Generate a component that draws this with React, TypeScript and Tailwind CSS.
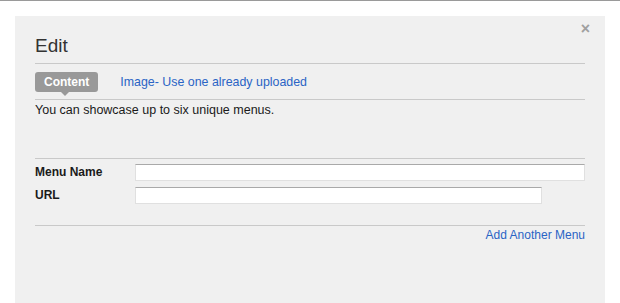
import React from 'react';

const font = { fontFamily: '"Liberation Sans", Arial, sans-serif' };

export default function App() {
  return (
    <div className="min-h-[303px] w-[620px] bg-white border-t border-[#9a9a9a]" style={font}>
      <div className="relative ml-[15px] mt-[15px] h-[287px] w-[590px] bg-[#f0f0f0] px-5 pt-[19px]">
        {/* Close */}
        <button className="absolute right-[15px] top-[5px] text-[16px] font-bold leading-none text-[#a0a0a0]">
          ×
        </button>

        {/* Title */}
        <h2 className="border-b border-[#c9c9c9] pb-[6px] text-[19px] leading-[22px] text-[#333]">Edit</h2>

        {/* Tabs */}
        <div className="flex items-center border-b border-[#c9c9c9] pt-2 pb-[7px]">
          <div className="relative rounded-[3px] bg-[#999] px-[9px] text-[12px] font-bold leading-[20px] text-white">
            Content
            <span className="absolute left-[26px] top-[20px] h-0 w-0 border-x-[4px] border-t-[4px] border-x-transparent border-t-[#999]" />
          </div>
          <a className="ml-[22px] text-[12.4px] leading-[20px] text-[#2a64c5]" href="#">
            Image- Use one already uploaded
          </a>
        </div>

        <p className="pt-[3px] text-[12.5px] leading-[15px] text-[#1a1a1a]">You can showcase up to six unique menus.</p>

        {/* Form */}
        <div className="mt-[40px] border-t border-[#c9c9c9] pt-[5px] pb-[21px]">
          <div className="flex items-center">
            <label className="w-[100px] text-[12px] font-bold leading-[17px] text-[#1a1a1a]">Menu Name</label>
            <input className="h-[17px] flex-1 border border-[#e0e0e0] border-t-[#a9a9a9] bg-white" />
          </div>
          <div className="mt-[6px] flex items-center">
            <label className="w-[100px] text-[12px] font-bold leading-[17px] text-[#1a1a1a]">URL</label>
            <input className="h-[17px] w-[407px] border border-[#e0e0e0] border-t-[#a9a9a9] bg-white" />
          </div>
        </div>

        <div className="border-t border-[#c9c9c9] pt-[2px] text-right text-[12px] leading-[14px]">
          <a className="text-[#2a64c5]" href="#">
            Add Another Menu
          </a>
        </div>
      </div>
    </div>
  );
}
